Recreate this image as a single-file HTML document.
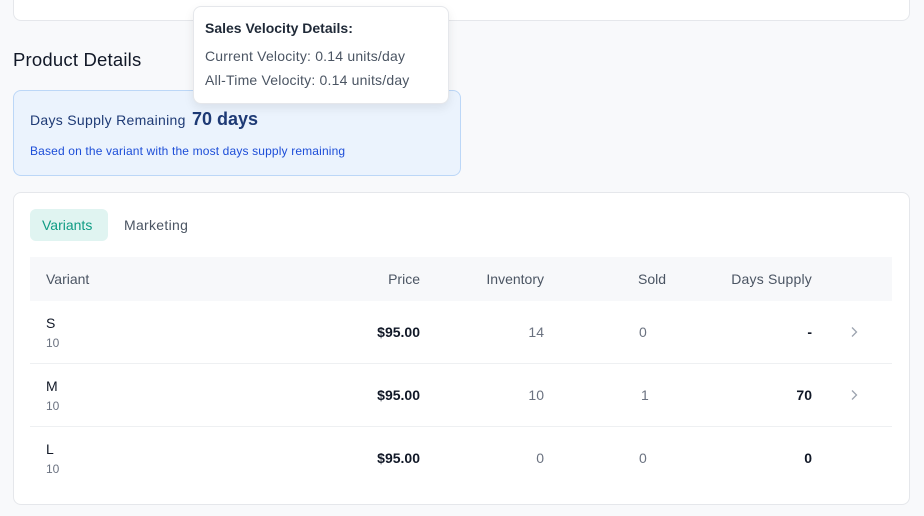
<!DOCTYPE html>
<html><head><style>
body{margin:0;width:924px;height:516px;background:#f8f9fb;font-family:"Liberation Sans",sans-serif;position:relative;overflow:hidden;color:#111827}
.a{position:absolute}
.card{background:#fff;border:1px solid #e5e7eb;border-radius:8px;box-sizing:border-box}
.h{font-size:14px;color:#4b5563}
.r{text-align:right}
.c{font-size:14px}
.line{position:absolute;left:30px;width:862px;height:1px;background:#eef0f2}
</style></head><body>
<div class="a card" style="left:13px;top:-20px;width:897px;height:41px"></div>
<div class="a" style="left:13px;top:49px;font-size:18.5px;color:#111827;letter-spacing:0.2px">Product Details</div>
<div class="a" style="left:13px;top:90px;width:448px;height:86px;background:#ebf3fd;border:1px solid #bcd7f7;border-radius:8px;box-sizing:border-box"></div>
<div class="a" style="left:30px;top:112px;font-size:14px;color:#1e3a75;letter-spacing:0.3px">Days Supply Remaining</div>
<div class="a" style="left:192px;top:109px;font-size:18px;font-weight:bold;color:#1e3a75">70 days</div>
<div class="a" style="left:30px;top:144px;font-size:12px;color:#1d4ed8;letter-spacing:0.15px">Based on the variant with the most days supply remaining</div>

<div class="a" style="left:193px;top:6px;width:254px;height:96px;background:#fff;border:1px solid #e5e7eb;border-radius:8px;box-shadow:0 4px 10px rgba(0,0,0,0.08)"></div>
<div class="a" style="left:205px;top:20px;font-size:14px;font-weight:bold;color:#1f2937">Sales Velocity Details:</div>
<div class="a" style="left:205px;top:48px;font-size:14px;color:#4b5563;letter-spacing:0.2px">Current Velocity: 0.14 units/day</div>
<div class="a" style="left:205px;top:72px;font-size:14px;color:#4b5563;letter-spacing:0.2px">All-Time Velocity: 0.14 units/day</div>

<div class="a card" style="left:13px;top:192px;width:897px;height:313px"></div>
<div class="a" style="left:30px;top:209px;width:78px;height:32px;background:#e0f4f1;border-radius:6px"></div>
<div class="a" style="left:42px;top:217px;font-size:14px;color:#0f9c84">Variants</div>
<div class="a" style="left:124px;top:217px;font-size:14px;color:#4b5563;letter-spacing:0.3px">Marketing</div>
<div class="a" style="left:30px;top:257px;width:862px;height:44px;background:#f7f8fa"></div>
<div class="a h" style="left:46px;top:271px">Variant</div>
<div class="a h r" style="left:320px;width:100px;top:271px">Price</div>
<div class="a h r" style="left:444px;width:100px;top:271px">Inventory</div>
<div class="a h" style="left:638px;top:271px">Sold</div>
<div class="a h r" style="left:700px;width:112px;top:271px;letter-spacing:0.2px">Days Supply</div>

<div class="line" style="top:363px"></div>
<div class="line" style="top:426px"></div>

<div class="a c" style="left:46px;top:315px">S</div><div class="a" style="left:46px;top:336px;font-size:12px;color:#6b7280">10</div>
<div class="a c r" style="left:320px;width:100px;top:324px;font-weight:bold">$95.00</div>
<div class="a c r" style="left:444px;width:100px;top:324px;color:#6b7280">14</div>
<div class="a c" style="left:639px;top:324px;color:#6b7280">0</div>
<div class="a c r" style="left:700px;width:112px;top:324px;font-weight:bold">-</div>
<svg class="a" style="left:849px;top:325px" width="10" height="14" viewBox="0 0 10 14"><path d="M3 2.5 L7.5 7 L3 11.5" fill="none" stroke="#9ca3af" stroke-width="1.3"/></svg>

<div class="a c" style="left:46px;top:378px">M</div><div class="a" style="left:46px;top:399px;font-size:12px;color:#6b7280">10</div>
<div class="a c r" style="left:320px;width:100px;top:387px;font-weight:bold">$95.00</div>
<div class="a c r" style="left:444px;width:100px;top:387px;color:#6b7280">10</div>
<div class="a c" style="left:641px;top:387px;color:#6b7280">1</div>
<div class="a c r" style="left:700px;width:112px;top:387px;font-weight:bold">70</div>
<svg class="a" style="left:849px;top:388px" width="10" height="14" viewBox="0 0 10 14"><path d="M3 2.5 L7.5 7 L3 11.5" fill="none" stroke="#9ca3af" stroke-width="1.3"/></svg>

<div class="a c" style="left:46px;top:441px">L</div><div class="a" style="left:46px;top:462px;font-size:12px;color:#6b7280">10</div>
<div class="a c r" style="left:320px;width:100px;top:450px;font-weight:bold">$95.00</div>
<div class="a c r" style="left:444px;width:100px;top:450px;color:#6b7280">0</div>
<div class="a c" style="left:639px;top:450px;color:#6b7280">0</div>
<div class="a c r" style="left:700px;width:112px;top:450px;font-weight:bold">0</div>
</body></html>
